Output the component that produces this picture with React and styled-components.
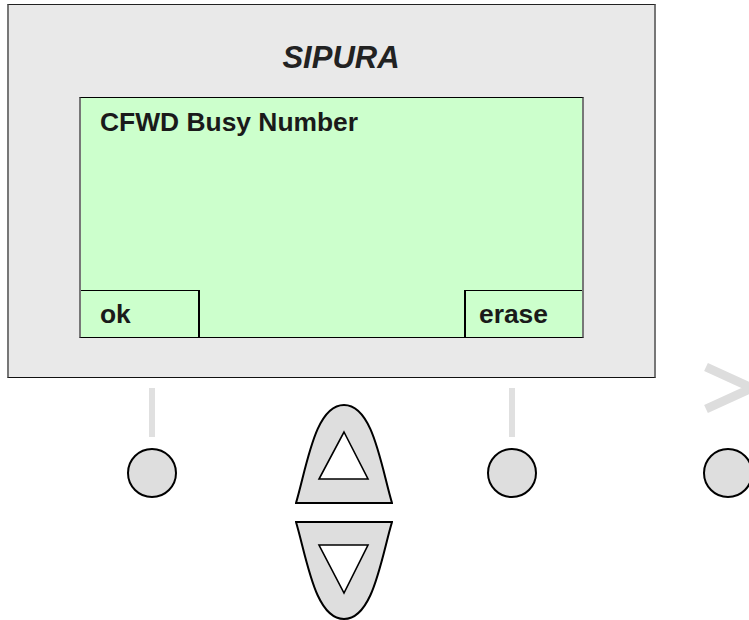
import React from 'react'
import styled, { createGlobalStyle } from 'styled-components'

const GlobalStyle = createGlobalStyle`
  html, body {
    margin: 0;
    padding: 0;
    background: #ffffff;
    font-family: "Liberation Sans", Arial, sans-serif;
    overflow: hidden;
  }
`

const SoftKey = ({ label, side }) => (
  <KeyBox $side={side}>
    <span>{label}</span>
  </KeyBox>
)

const PhoneKey = ({ offset, top }) => (
  <KeyColumn $offset={offset}>
    {top}
    <Round />
  </KeyColumn>
)

const NavKeys = ({ offset }) => (
  <NavColumn $offset={offset}>
    <svg width='98' height='100' viewBox='0 0 98 100'>
      <path d='M1 99 C 12 62, 20 1, 49 1 C 78 1, 86 62, 97 99 Z' fill='#dedede' stroke='#000' strokeWidth='2' />
      <path d='M49 28 L 73 75 L 24 75 Z' fill='#fff' stroke='#000' strokeWidth='1.6' />
    </svg>
    <svg width='98' height='99' viewBox='0 0 98 99'>
      <path d='M1 1 C 12 38, 20 98, 49 98 C 78 98, 86 38, 97 1 Z' fill='#dedede' stroke='#000' strokeWidth='2' />
      <path d='M24 24 L 73 24 L 49 72 Z' fill='#fff' stroke='#000' strokeWidth='1.6' />
    </svg>
  </NavColumn>
)

const Chevron = () => (
  <ChevronMark width='50' height='52' viewBox='0 0 50 52'>
    <polyline points='3,5 49,26 3,47' fill='none' stroke='#dddddd' strokeWidth='9' />
  </ChevronMark>
)

const App = () => {
  return (
    <Device>
      <GlobalStyle />
      <Panel>
        <Brand>SIPURA</Brand>
        <Screen>
          <Title>CFWD Busy Number</Title>
          <SoftRow>
            <SoftKey label='ok' side='left' />
            <SoftKey label='erase' side='right' />
          </SoftRow>
        </Screen>
      </Panel>
      <KeyRow>
        <PhoneKey offset={120} top={<Stem />} />
        <NavKeys offset={118} />
        <PhoneKey offset={94} top={<Stem />} />
        <PhoneKey offset={166} top={<Chevron />} />
      </KeyRow>
    </Device>
  )
}

export default App

const Device = styled.div`
  width: 749px;
  height: 620px;
  box-sizing: border-box;
  padding: 4px 0 0 7px;
`

const Panel = styled.div`
  width: 649px;
  height: 374px;
  box-sizing: border-box;
  background-color: #e9e9e9;
  border-top: 1px solid #222;
  border-bottom: 1px solid #111;
  border-left: 2px solid #777;
  border-right: 2px solid #777;

  display: flex;
  flex-direction: column;
  align-items: center;
`

const Brand = styled.div`
  margin-top: 37px;
  padding-left: 19px;
  font-size: 31px;
  line-height: 31px;
  font-weight: 700;
  font-style: italic;
  color: #222;
`

const Screen = styled.div`
  margin-top: 24px;
  width: 505px;
  height: 241px;
  box-sizing: border-box;
  background-color: #ccffcc;
  border-top: 1px solid #000;
  border-bottom: 1px solid #000;
  border-left: 2px solid #777;
  border-right: 2px solid #777;

  display: flex;
  flex-direction: column;
  justify-content: space-between;
`

const Title = styled.div`
  padding: 11px 0 0 19px;
  font-size: 26.4px;
  line-height: 26px;
  font-weight: 700;
  color: #1a1a1a;
`

const SoftRow = styled.div`
  display: flex;
  justify-content: space-between;
  align-items: flex-end;
`

const KeyBox = styled.div`
  width: ${p => (p.$side === 'left' ? '119px' : '118px')};
  height: 47px;
  box-sizing: border-box;
  border-top: 1px solid #000;
  border-right: ${p => (p.$side === 'left' ? '2px solid #000' : 'none')};
  border-left: ${p => (p.$side === 'right' ? '2px solid #000' : 'none')};
  padding: 10px 0 0 ${p => (p.$side === 'left' ? '19px' : '13px')};

  span {
    display: block;
    font-size: 26.4px;
    line-height: 26px;
    font-weight: 700;
    color: #1a1a1a;
  }
`

const KeyRow = styled.div`
  margin-top: 10px;
  display: flex;
  align-items: flex-start;
`

const KeyColumn = styled.div`
  margin-left: ${p => p.$offset}px;
  width: 50px;
  display: flex;
  flex-direction: column;
  align-items: center;
  flex-shrink: 0;
`

const Stem = styled.div`
  width: 6px;
  height: 49px;
  background-color: #e0e0e0;
`

const ChevronMark = styled.svg`
  display: block;
  margin-top: -26px;
  margin-bottom: 23px;
`

const Round = styled.div`
  margin-top: 11px;
  width: 50px;
  height: 50px;
  box-sizing: border-box;
  border-radius: 50%;
  border: 2px solid #000;
  background-color: #dedede;
`

const NavColumn = styled.div`
  margin-left: ${p => p.$offset}px;
  margin-top: 16px;
  width: 98px;
  flex-shrink: 0;
  display: flex;
  flex-direction: column;
  gap: 17px;

  svg {
    display: block;
  }
`
